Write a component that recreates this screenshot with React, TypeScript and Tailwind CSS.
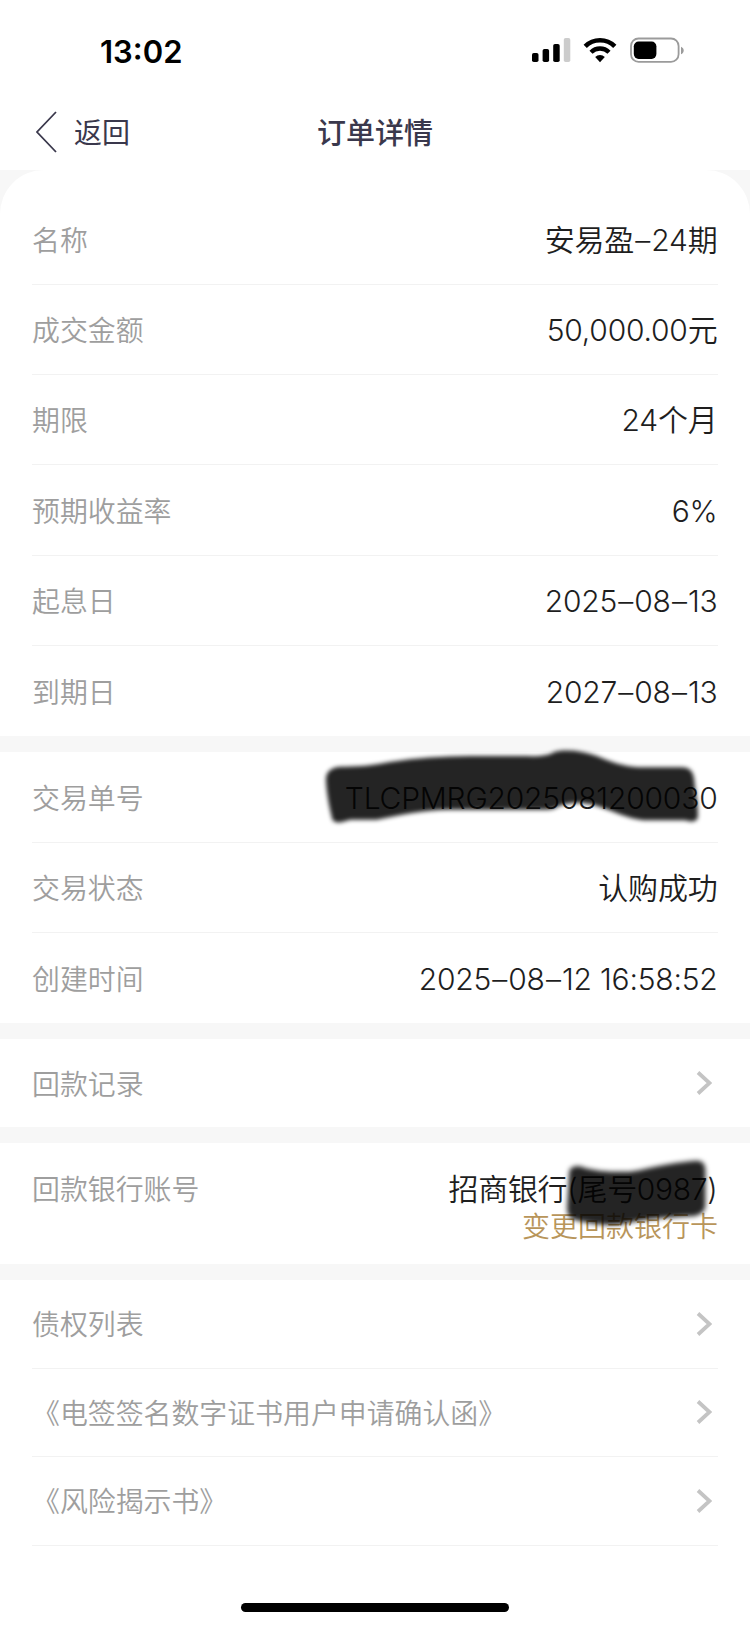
import { Fragment, type ReactNode } from "react";
import clsx from "clsx";

type Item = { label: string; value: string };

const product: Item[] = [
  { label: "名称", value: "安易盈–24期" },
  { label: "成交金额", value: "50,000.00元" },
  { label: "期限", value: "24个月" },
  { label: "预期收益率", value: "6%" },
  { label: "起息日", value: "2025–08–13" },
  { label: "到期日", value: "2027–08–13" },
];

const documents = ["债权列表", "《电签签名数字证书用户申请确认函》", "《风险揭示书》"];

function StatusBar() {
  return (
    <div className="flex h-[100px] items-center justify-between pr-[65px] pl-[100px]">
      <span className="pt-0.5 text-[31px] leading-none font-semibold text-black">13:02</span>
      <svg width="153" height="26" viewBox="0 0 153 26" fill="none">
        <rect x="0" y="16" width="6.5" height="9" rx="1.8" fill="#000" />
        <rect x="10.6" y="12" width="6.5" height="13" rx="1.8" fill="#000" />
        <rect x="21.2" y="7" width="6.5" height="18" rx="1.8" fill="#000" />
        <rect x="31.8" y="1" width="6.5" height="24" rx="1.8" fill="#ccc" />
        <path d="M53.2 9.4a21 21 0 0 1 29.6 0" stroke="#000" strokeWidth="4.6" />
        <path d="M59 15.2a12.8 12.8 0 0 1 18 0" stroke="#000" strokeWidth="4.4" />
        <path d="M63.2 19.9a6.9 6.9 0 0 1 9.6 0L68 25.2z" fill="#000" />
        <rect x="99" y="1.5" width="47.6" height="23.4" rx="7.6" stroke="#9b9b9b" strokeWidth="1.8" />
        <rect x="101.8" y="4.5" width="22.6" height="17.4" rx="4.8" fill="#000" />
        <path d="M149 9.7v7.6c1.7-.7 2.7-2.1 2.7-3.8s-1-3.1-2.7-3.8z" fill="#9b9b9b" />
      </svg>
    </div>
  );
}

function NavBar() {
  return (
    <header className="grid h-[70px] grid-cols-3 items-center px-9 pb-1 text-[#3a384c]">
      <div className="flex items-center gap-[17px]">
        <svg className="-mt-0.5" width="21" height="42" viewBox="0 0 21 42" fill="none">
          <path d="M20 1L1 21L20 41" stroke="currentColor" strokeWidth="1.8" />
        </svg>
        <span className="text-[28px] leading-none">返回</span>
      </div>
      <h1 className="text-center text-[29px] leading-none font-medium">订单详情</h1>
    </header>
  );
}

function Label({ children }: { children: ReactNode }) {
  return (
    <span className="pt-[5px] text-[27.9px] leading-none font-[350] text-[#9e9e9e]">
      {children}
    </span>
  );
}

// Dates and series names use a wide dash with a little air around it
function Value({ text, className }: { text: string; className?: string }) {
  return (
    <span
      className={clsx(
        "pt-px pr-[0.5px] text-[30px] leading-none font-[350] whitespace-pre text-[#1e1e1e]",
        className ?? "tracking-[-0.2px]"
      )}
    >
      {text.split("–").map((part, i) => (
        <Fragment key={i}>
          {i > 0 && <span className="mx-[1.2px]">–</span>}
          {part}
        </Fragment>
      ))}
    </span>
  );
}

function Row({ label, children }: { label: string; children: ReactNode }) {
  return (
    <div className="flex h-[90.33px] items-center justify-between border-b border-[#f2f2f2] last:border-b-0">
      <Label>{label}</Label>
      {children}
    </div>
  );
}

function Chevron() {
  return (
    <svg className="mr-[6px]" width="16" height="24" viewBox="0 0 16 24" fill="none">
      <path d="M2 1.5L13.5 12L2 22.5" stroke="#c4c4c4" strokeWidth="3.8" />
    </svg>
  );
}

type MarkerProps = { id: string; d: string; viewBox: string; blur: number; className: string };

function Marker({ id, d, viewBox, blur, className }: MarkerProps) {
  return (
    <svg
      className={clsx("pointer-events-none absolute overflow-visible", className)}
      viewBox={viewBox}
      fill="none"
    >
      <filter id={id} x="-10%" y="-20%" width="120%" height="140%">
        <feGaussianBlur stdDeviation={blur} />
      </filter>
      <path d={d} fill="#000" fillOpacity="0.86" filter={`url(#${id})`} />
    </svg>
  );
}

export default function App() {
  return (
    <main className="flex h-[1626px] w-[750px] flex-col overflow-hidden bg-white font-[Inter,'Noto_Sans_CJK_SC',sans-serif]">
      <StatusBar />
      <NavBar />

      <div className="flex flex-col gap-4 bg-[#f7f7f7]">
        <section className="rounded-t-[44px] bg-white px-8 pt-[24.5px]">
          {product.map((item) => (
            <Row key={item.label} label={item.label}>
              <Value text={item.value} />
            </Row>
          ))}
        </section>

        <section className="bg-white px-8">
          <Row label="交易单号">
            <div className="relative flex">
              <Value text="TLCPMRG2025081200030" className="tracking-[-0.2px]" />
              <Marker
                id="marker-order"
                viewBox="0 0 1224 360"
                blur={6}
                className="-top-[51px] right-0 h-[120px] w-[408px] max-w-none"
                d="M48 150C46 125 60 108 95 107C150 108 190 102 240 93C320 80 400 76 480 75H640C700 77 715 72 735 62C770 54 820 60 860 75C900 92 940 106 985 109H1110C1145 108 1152 125 1154 160C1158 195 1166 230 1163 262C1155 276 1140 272 1125 268H1000C950 262 910 240 870 228C840 215 770 208 735 232C720 238 700 236 680 236H420C340 236 270 252 200 266H120C100 272 80 280 68 268C60 240 50 190 48 150Z"
              />
            </div>
          </Row>
          <Row label="交易状态">
            <Value text="认购成功" />
          </Row>
          <Row label="创建时间">
            <Value text="2025–08–12 16:58:52" />
          </Row>
        </section>

        <section className="flex h-[87.5px] items-center justify-between bg-white px-8">
          <Label>回款记录</Label>
          <Chevron />
        </section>

        <section className="flex h-[121px] items-start justify-between bg-white px-8 pt-[29px]">
          <Label>回款银行账号</Label>
          <div className="relative flex flex-col items-end gap-[9px] pt-px">
            <Value text="招商银行(尾号0987)" className="tracking-[-0.3px]" />
            <span className="text-[28px] leading-none font-[350] text-[#b8955a]">
              变更回款银行卡
            </span>
            <Marker
              id="marker-account"
              viewBox="0 0 864 270"
              blur={8}
              className="-top-[21px] right-0 h-[90px] w-[288px] max-w-none"
              d="M418 62C420 45 445 42 462 50C500 60 540 64 600 62C650 56 700 38 790 30C820 26 826 40 826 60V165C824 185 805 196 780 196C700 200 640 206 580 218C530 228 480 218 440 208C415 204 410 190 412 160Z"
            />
          </div>
        </section>

        <section className="bg-white px-8">
          {documents.map((name) => (
            <div
              key={name}
              className="flex h-[88.6px] items-center justify-between border-b border-[#f2f2f2]"
            >
              <Label>{name}</Label>
              <Chevron />
            </div>
          ))}
        </section>
      </div>

      <div className="mt-auto mb-[14px] h-[9px] w-[268px] self-center rounded-full bg-black" />
    </main>
  );
}
